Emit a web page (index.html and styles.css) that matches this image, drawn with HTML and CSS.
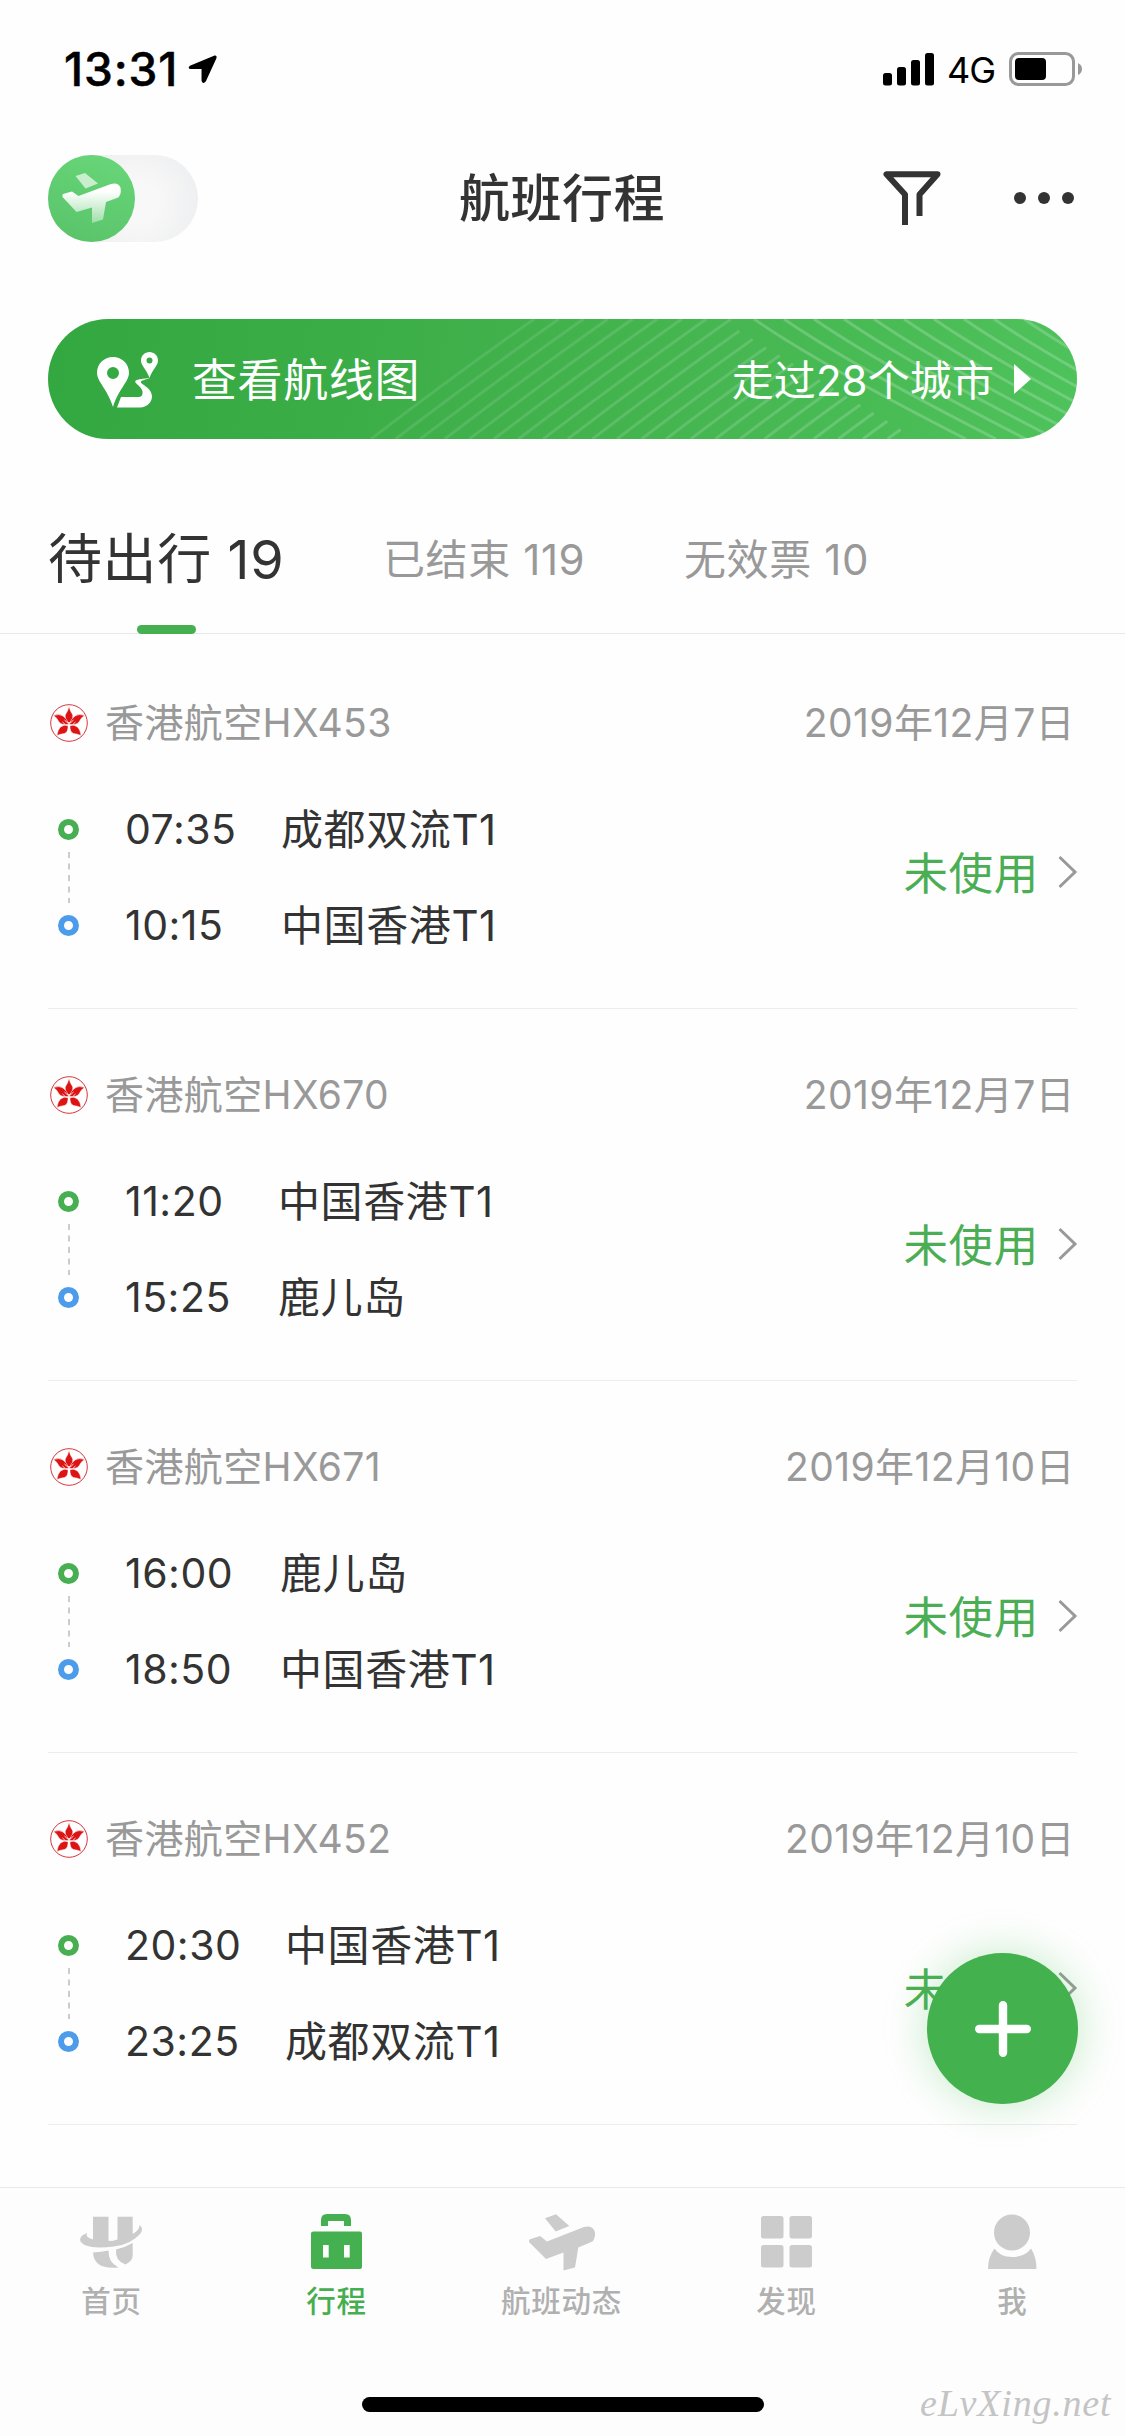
FILE: index.html
```
<!DOCTYPE html>
<html lang="zh-CN">
<head>
<meta charset="utf-8">
<title>航班行程</title>
<link rel="stylesheet" href="styles.css">
</head>
<body>
<svg class="defs" aria-hidden="true">
  <defs>
    <linearGradient id="wing" x1="0" y1="0" x2="0" y2="1"><stop offset="0.2" stop-color="#fff"/><stop offset="1" stop-color="#fff" stop-opacity=".4"/></linearGradient>
    <symbol id="logo" viewBox="0 0 38 38">
      <circle cx="19" cy="19" r="18.3" fill="#fff" stroke="#d4373c" stroke-width="1"/>
      <g fill="#dc1414" stroke="#fff" stroke-width=".5">
        <path d="M19 19.500Q14.500 16 15.200 11Q18 7 19 2.500Q20 7 22.800 11Q23.500 16 19 19.500Z"/>
        <path d="M18.500 20.500Q12 21.500 9 18Q7.500 14 3.500 11.500Q9 9.500 13 12Q17.500 15 18.500 20.500Z"/>
        <path d="M19.500 20.500Q26 21.500 29 18Q30.500 14 34.500 11.500Q29 9.500 25 12Q20.500 15 19.500 20.500Z"/>
        <path d="M18 21Q18.500 28 14.500 29.500Q10.500 30 7 31.500Q7.500 26 10.500 23Q14 20.500 18 21Z"/>
        <path d="M20 21Q19.500 28 23.500 29.500Q27.500 30 31 31.500Q30.500 26 27.500 23Q24 20.500 20 21Z"/>
      </g>
      <path d="M12.500 18Q19 26 25.500 18M14.500 16Q19 21.500 23.500 16" fill="none" stroke="#fff" stroke-width=".8"/>
    </symbol>
    <symbol id="chevron" viewBox="0 0 20 34"><path d="M1.500 2L17 17L1.500 32" fill="none" stroke="#999" stroke-width="3"/></symbol>
    <symbol id="dash" viewBox="0 0 4 52"><path d="M2 0V51" stroke="#ccc" stroke-width="2" stroke-dasharray="6 5.500"/></symbol>
  </defs>
</svg>
<div class="screen">
  <div class="status-bar">
    <div class="clock">13:31</div>
    <svg class="locate" viewBox="0 0 32 32"><path d="M28.500 1.500L3 12Q0 15 4 15.500H15V27.500Q16.500 32 19.500 28L30.500 4Q31 1 28.500 1.500Z"/></svg>
    <svg class="signal" viewBox="0 0 52 33"><rect y="20" width="9" height="12.500" rx="2.500"/><rect x="14" y="14" width="9" height="18.500" rx="2.500"/><rect x="28" y="7" width="9" height="25.500" rx="2.500"/><rect x="42" width="9" height="32.500" rx="2.500"/></svg>
    <div class="network">4G</div>
    <svg class="battery" viewBox="0 0 74 34"><rect x="1.500" y="1.500" width="63" height="31" rx="8" fill="none" stroke="#999" stroke-width="3"/><rect x="6" y="6" width="31" height="22" rx="4"/><path d="M69 11Q73 13 73 17T69 23Z" fill="#999"/></svg>
  </div>

  <div class="nav-bar">
    <div class="toggle"><div class="toggle-knob">
      <svg viewBox="0 0 60 52"><path fill="#fff" opacity=".65" d="M13.500 3L23 0L36 10.500L23.500 15.500Z"/><path fill="url(#wing)" d="M1 21L10 18.500L16.500 23L49 11Q56 9 58.500 14.500Q60 23 55 25L44 29L41 46.500L30 50V34.500L14.500 39L.5 24Q0 21.500 1 21Z"/></svg>
    </div></div>
    <h1 class="title">航班行程</h1>
    <svg class="filter" viewBox="0 0 58 56"><path d="M22 54V23.500L3.500 3.200H54.500L36.500 23.500V45" fill="none" stroke="#333" stroke-width="6" stroke-linejoin="round"/></svg>
    <svg class="more" viewBox="0 0 62 14"><circle cx="7" cy="7" r="6"/><circle cx="31" cy="7" r="6"/><circle cx="55" cy="7" r="6"/></svg>
  </div>

  <div class="banner">
    <svg class="banner-lines" viewBox="0 0 1029 120" id="lines"></svg>
    <svg class="route" viewBox="0 0 62 56"><path fill="#fff" fill-rule="evenodd" d="M16 5C7 5 0 12 0 20.500C0 30 10 36 16 55C22 36 32 30 32 20.500C32 12 25 5 16 5ZM16 15A6 6 0 1 1 16 27A6 6 0 1 1 16 15ZM52.500 0C48 0 44 3.500 44 8.500C44 14 49.500 17 52.500 26C55.500 17 61 14 61 8.500C61 3.500 57 0 52.500 0ZM52.500 5.500A3 3 0 1 1 52.500 11.500A3 3 0 1 1 52.500 5.500Z"/><path fill="#fff" d="M53 26C41 27 37 28 38.500 30.500C40 33 48 37 45 43.500Q44 45 41 45H24L20 55.500H43C50 55.500 55 50 55 44.500C55 35 42 32 44 29.500C45 28 50 27.500 53 26Z"/></svg>
    <span class="banner-title">查看航线图</span>
    <span class="banner-info">走过28个城市</span>
    <svg class="play" viewBox="0 0 17 30"><path d="M0 0L17 15L0 30Z" fill="#fff"/></svg>
  </div>

  <div class="tabs">
    <div class="tab tab-on">待出行 19</div>
    <div class="tab tab-ended">已结束 119</div>
    <div class="tab">无效票 10</div>
  </div>

  <div class="list">
    <div class="flight">
      <div class="flight-head"><svg class="logo"><use href="#logo"/></svg><span>香港航空HX453</span><span class="date">2019年12月7日</span></div>
      <div class="flight-body">
        <div class="track"><i class="dot"></i><svg class="dash"><use href="#dash"/></svg><i class="dot dot-end"></i></div>
        <div class="legs col-a"><span class="time">07:35</span><span>成都双流T1</span><span class="time">10:15</span><span>中国香港T1</span></div>
        <div class="state">未使用</div><svg class="chevron"><use href="#chevron"/></svg>
      </div>
    </div>
    <div class="flight">
      <div class="flight-head"><svg class="logo"><use href="#logo"/></svg><span>香港航空HX670</span><span class="date">2019年12月7日</span></div>
      <div class="flight-body">
        <div class="track"><i class="dot"></i><svg class="dash"><use href="#dash"/></svg><i class="dot dot-end"></i></div>
        <div class="legs col-b"><span class="time">11:20</span><span>中国香港T1</span><span class="time">15:25</span><span>鹿儿岛</span></div>
        <div class="state">未使用</div><svg class="chevron"><use href="#chevron"/></svg>
      </div>
    </div>
    <div class="flight">
      <div class="flight-head"><svg class="logo"><use href="#logo"/></svg><span>香港航空HX671</span><span class="date">2019年12月10日</span></div>
      <div class="flight-body">
        <div class="track"><i class="dot"></i><svg class="dash"><use href="#dash"/></svg><i class="dot dot-end"></i></div>
        <div class="legs col-c"><span class="time">16:00</span><span>鹿儿岛</span><span class="time">18:50</span><span>中国香港T1</span></div>
        <div class="state">未使用</div><svg class="chevron"><use href="#chevron"/></svg>
      </div>
    </div>
    <div class="flight">
      <div class="flight-head"><svg class="logo"><use href="#logo"/></svg><span>香港航空HX452</span><span class="date">2019年12月10日</span></div>
      <div class="flight-body">
        <div class="track"><i class="dot"></i><svg class="dash"><use href="#dash"/></svg><i class="dot dot-end"></i></div>
        <div class="legs col-d"><span class="time">20:30</span><span>中国香港T1</span><span class="time">23:25</span><span>成都双流T1</span></div>
        <div class="state">未使用</div><svg class="chevron"><use href="#chevron"/></svg>
      </div>
    </div>
  </div>

  <div class="fab"><svg viewBox="0 0 56 56"><path d="M28 4.200V51.800M4.200 28H51.800" stroke="#fff" stroke-width="8.400" stroke-linecap="round"/></svg></div>

  <div class="tab-bar">
    <div class="item"><svg viewBox="0 0 80 60"><path d="M22 5.700H37.500V30Q42 30 46.500 28.500V5.700H61.700V23Q69 18.500 68.500 14Q73 17 69.500 22.500Q60 33.500 43 35.500Q12 39 9 29Q9 24.500 16 22Q14 26.500 22 28.500ZM22 41.500Q30 41 37.500 39.500Q37 51 47.500 56.500Q23 59 22 41.500ZM45 38.500Q54 36.500 61.700 32V45Q61 50.500 54.500 53.500Q44 50 45 38.500Z"/></svg><span>首页</span></div>
    <div class="item item-on"><svg viewBox="0 0 80 60"><path d="M25 15V9Q25 3 31 3H49Q55 3 55 9V15H48V10H32V15Z"/><path fill-rule="evenodd" d="M17.500 20.500H64Q66 20.500 66 22.500V56Q66 58 64 58H17.500Q15 58 15 56V22.500Q15 20.500 17.500 20.500ZM27 34V46.500H32.700V34ZM48 34V46.500H53.700V34Z"/></svg><span>行程</span></div>
    <div class="item"><svg viewBox="0 0 80 60"><path d="M24 7.300L35 3.300L48.300 15L34.700 20.500ZM8.300 28.500L19 25L26 30.500L62.300 16.300Q71 13.500 74 21Q74.500 27 71.500 30.500L57.300 36.500L54 56.500L42.500 59.500V41.500L25 48L8 31Z"/></svg><span>航班动态</span></div>
    <div class="item"><svg viewBox="0 0 80 60"><rect x="15" y="5" width="22.500" height="22.500" rx="2.500"/><rect x="43.500" y="5" width="22.500" height="22.500" rx="2.500"/><rect x="15" y="34" width="22.500" height="22.500" rx="2.500"/><rect x="43.500" y="34" width="22.500" height="22.500" rx="2.500"/></svg><span>发现</span></div>
    <div class="item item-me"><svg viewBox="0 0 80 60"><circle cx="40" cy="21.500" r="18"/><path d="M22.500 37.500Q28 46 40 46Q53 46 59 37.500Q64.500 46 64.500 58H16Q16 46 22.500 37.500Z"/></svg><span>我</span></div>
  </div>
  <div class="home-indicator"></div>
  <div class="watermark">eLvXing.net</div>
</div>
<script src="lines.js"></script>
</body>
</html>
```
FILE: styles.css
```
* { box-sizing: border-box; }
body { margin: 0; background: #fff; }
svg { display: block; flex: none; }
.defs { position: absolute; width: 0; height: 0; }
.screen {
  position: relative;
  width: 1125px;
  height: 2436px;
  overflow: hidden;
  background: #fefefe;
  color: #333;
  font-family: Inter, "Noto Sans CJK SC", sans-serif;
  font-weight: 399;
  white-space: nowrap;
}

.status-bar { display: flex; align-items: center; height: 138px; padding: 0 43px 0 64px; color: #000; }
.clock { width: 123px; font-size: 46px; font-weight: 500; letter-spacing: .9px; -webkit-text-stroke: .5px #000; }
.locate { width: 31px; height: 31px; }
.signal { width: 52px; height: 33px; margin-left: auto; }
.network { width: 47px; margin: 2px 15px 0 12px; font-size: 36px; letter-spacing: -1px; }
.battery { width: 74px; height: 34px; margin-right: -1px; }

.nav-bar { display: flex; align-items: center; height: 121px; padding: 0 50px 0 48px; }
.toggle { width: 150px; height: 87px; border-radius: 44px; background: radial-gradient(circle at 60% 55%, #f8f8f8 20%, #ebecee 75%); }
.toggle-knob { display: flex; align-items: center; justify-content: center; width: 87px; height: 87px; border-radius: 50%; background: linear-gradient(20deg, #59c268, #68d77a); }
.toggle-knob svg { width: 60px; height: 52px; margin-top: 1px; }
.title { width: 206px; margin: 0 0 0 261px; font-size: 51px; font-weight: 500; letter-spacing: .5px; line-height: 74px; }
.filter { width: 58px; height: 56px; margin-left: 218px; }
.more { width: 62px; height: 14px; margin: -2px 0 0 auto; fill: #333; }

.banner {
  position: relative;
  display: flex;
  align-items: center;
  height: 120px;
  margin: 60px 48px 0;
  padding: 0 46px 0 49px;
  overflow: hidden;
  border-radius: 60px;
  background: linear-gradient(97deg, #33a740, #43b34e 55%, #4ec25b);
  color: #fff;
}
.banner-lines { position: absolute; inset: 0; width: 1029px; height: 120px; fill: none; stroke: #fff; stroke-width: 3; }
.route { position: relative; width: 62px; height: 56px; margin-top: 1px; }
.banner-title { position: relative; margin: -3px 0 0 33px; font-size: 45px; letter-spacing: .6px; }
.banner-info { position: relative; margin: -3px 0 0 auto; font-size: 42px; letter-spacing: .1px; }
.play { position: relative; width: 17px; height: 30px; margin-left: 20px; }

.tabs { display: flex; align-items: center; height: 195px; padding: 0 48px; border-bottom: 1px solid #e8e8e8; color: #999; font-size: 42px; }
.tab { height: 194px; line-height: 241px; letter-spacing: .6px; }
.tab-on { position: relative; width: 335px; color: #333; font-size: 54px; }
.tab-on::after { content: ""; position: absolute; left: 89px; bottom: -1px; width: 59px; height: 9px; border-radius: 5px; background: #45b050; }
.tab-ended { width: 301px; }

.list { padding: 3px 48px 0; }
.flight { height: 372px; padding-top: 59px; border-bottom: 1px solid #ededed; }
.flight-head { display: flex; align-items: center; height: 56px; padding-right: 2px; color: #999; font-size: 39px; letter-spacing: .4px; }
.flight-head span { margin-top: -8px; }
.logo { width: 38px; height: 38px; margin: -3px 17px 0 2px; }
.flight-head .date { margin-left: auto; }
.flight-body { display: flex; align-items: center; height: 195px; margin-top: 27px; }
.track { display: flex; flex-direction: column; align-items: center; justify-content: space-between; width: 21px; height: 117px; margin: 2px 0 0 10px; }
.dot { width: 21px; height: 21px; border: 6px solid #47ae51; border-radius: 50%; }
.dot-end { border-color: #4d9cec; }
.dash { width: 4px; height: 52px; }
.legs { display: grid; grid-template-rows: 96px 96px; align-items: center; margin: -5px 0 0 46px; font-size: 42px; letter-spacing: .6px; }
.time { margin-top: 5px; font-size: 41px; letter-spacing: .5px; }
.col-a { grid-template-columns: 156px auto; }
.col-b { grid-template-columns: 153px auto; }
.col-c { grid-template-columns: 155px auto; }
.col-d { grid-template-columns: 160px auto; }
.state { margin: -12px 19px 0 auto; color: #4bae54; font-size: 44.500px; letter-spacing: .7px; }
.chevron { width: 20px; height: 34px; margin: -9px -1px 0 0; }

.fab { position: absolute; left: 927px; top: 1953px; display: flex; align-items: center; justify-content: center; width: 151px; height: 151px; border-radius: 50%; background: #43b14e; box-shadow: 0 0 44px rgba(67, 190, 80, .32); }
.fab svg { width: 56px; height: 56px; }

.tab-bar { position: absolute; left: 0; right: 0; bottom: 0; display: grid; grid-template-columns: repeat(5, 1fr); height: 249px; padding-top: 23px; border-top: 1px solid #e9e9e9; background: #fdfdfd; }
.item { display: flex; flex-direction: column; align-items: center; color: #b0b0b0; fill: #ccc; font-size: 29.500px; font-weight: 500; }
.item svg { width: 80px; height: 60px; margin-left: -3px; }
.item span { height: 44px; margin: 8px 0 0 -2px; line-height: 44px; letter-spacing: .8px; }
.item-on { color: #45ae50; fill: #45b050; }
.item-me svg { margin-left: -1px; }
.item-me span { margin-left: 0; }
.home-indicator { position: absolute; left: 362px; bottom: 24px; width: 402px; height: 15px; border-radius: 8px; background: #000; }
.watermark { position: absolute; left: 920px; bottom: 11px; color: #c4c4c4; font: italic 38px/44px "Liberation Serif", serif; letter-spacing: .8px; }
```
FILE: lines.js
```
// Fine diagonal stripes across the route banner.
const svg = document.getElementById("lines");
const ns = "http://www.w3.org/2000/svg";
function line(d, opacity) {
  const p = document.createElementNS(ns, "path");
  p.setAttribute("d", d);
  p.setAttribute("stroke-opacity", opacity);
  svg.appendChild(p);
}
for (let i = 0; i < 22; i++) {
  const x = 323 + i * 24.6;
  // later stripes stop short of the top edge, along the crossing set
  const top = i < 9 ? 0 : 12 + (i - 9) * 8.2;
  const w = (120 - top) * 1.36;
  line(`M${x} 120Q${x + w * 0.52} ${120 - (120 - top) * 0.54} ${x + w} ${top}`, 0.1 + i * 0.004);
}
for (let i = 0; i < 10; i++) {
  const x = 706 + i * 30;
  line(`M${x} 0Q${x + 65} 45 ${x + 212} 120`, 0.2);
}
```
